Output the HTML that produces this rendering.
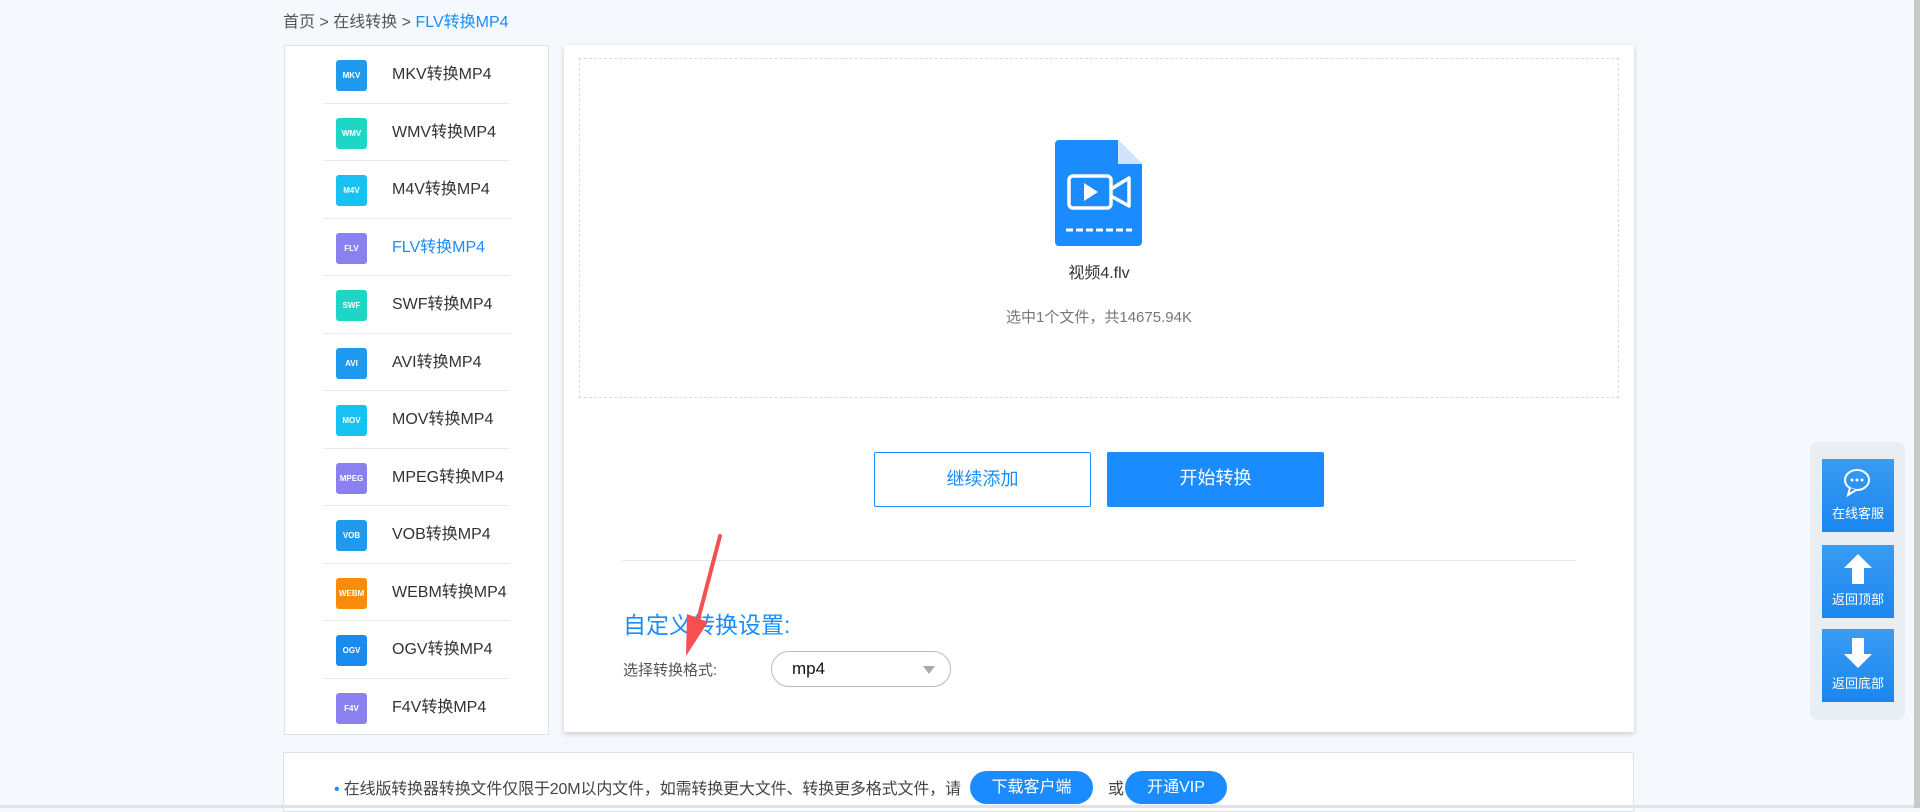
<!DOCTYPE html>
<html><head><meta charset="utf-8"><style>
*{margin:0;padding:0;box-sizing:border-box}
body{width:1920px;height:808px;overflow:hidden;background:#f5f9fd;font-family:"Liberation Sans","Noto Sans CJK SC",sans-serif;position:relative;color:#333}
.abs{position:absolute}
.bc{left:283px;top:8px;font-size:16px;color:#555}
.bc b{font-weight:normal;color:#1a8cff}
.side{left:284px;top:45px;width:265px;height:690px;background:#fff;border:1px solid #dde3ea}
.item{position:absolute;left:38px;width:187px;height:57.5px;border-bottom:1px solid #e8ecf0}
.item:last-child{border-bottom:none}
.ic{position:absolute;left:13px;top:14px;width:31px;height:31px;border-radius:3px;color:#fff;font-size:8px;font-weight:bold;text-align:center;line-height:31px}
.it{position:absolute;left:69px;top:0;line-height:57px;font-size:16px;color:#333}
.main{left:564px;top:45px;width:1070px;height:687px;background:#fff;box-shadow:0 2px 5px rgba(0,0,0,.18)}
.dash{left:15px;top:13px;width:1040px;height:340px;border:1px dashed #d5dbe2}
.btn{position:absolute;top:407px;width:217px;height:55px;font-size:18px;text-align:center;line-height:53px;border-radius:2px}
.side2{left:1810px;top:442px;width:95px;height:278px;background:#e9eef3;border-radius:8px}
.fb{position:absolute;left:12px;width:72px;height:73px;background:linear-gradient(#3a9cf2,#1a86f0);color:#fff;font-size:13px;text-align:center}
.fb span{position:absolute;left:0;right:0;bottom:10px}
.bot{left:283px;top:752px;width:1351px;height:60px;background:#fff;border:1px solid #dde3ea}
.pill{position:absolute;top:18px;height:33px;border-radius:17px;background:#1a8cff;color:#fff;font-size:16px;text-align:center;line-height:33px}
</style></head><body>
<div class="abs bc">首页 &gt; 在线转换 &gt; <b>FLV转换MP4</b></div>
<div class="abs side">
<div class="item" style="top:0"><div class="ic" style="background:#1e9bf0">MKV</div><div class="it">MKV转换MP4</div></div>
<div class="item" style="top:57.5px"><div class="ic" style="background:#1dd6c6">WMV</div><div class="it">WMV转换MP4</div></div>
<div class="item" style="top:115px"><div class="ic" style="background:#17c1f2">M4V</div><div class="it">M4V转换MP4</div></div>
<div class="item" style="top:172.5px"><div class="ic" style="background:#8a80f0">FLV</div><div class="it" style="color:#1a8cff">FLV转换MP4</div></div>
<div class="item" style="top:230px"><div class="ic" style="background:#1dd6c6">SWF</div><div class="it">SWF转换MP4</div></div>
<div class="item" style="top:287.5px"><div class="ic" style="background:#1e9bf0">AVI</div><div class="it">AVI转换MP4</div></div>
<div class="item" style="top:345px"><div class="ic" style="background:#17c1f2">MOV</div><div class="it">MOV转换MP4</div></div>
<div class="item" style="top:402.5px"><div class="ic" style="background:#8a80f0">MPEG</div><div class="it">MPEG转换MP4</div></div>
<div class="item" style="top:460px"><div class="ic" style="background:#1e9bf0">VOB</div><div class="it">VOB转换MP4</div></div>
<div class="item" style="top:517.5px"><div class="ic" style="background:#fa8c0a">WEBM</div><div class="it">WEBM转换MP4</div></div>
<div class="item" style="top:575px"><div class="ic" style="background:#1a8cf0">OGV</div><div class="it">OGV转换MP4</div></div>
<div class="item" style="top:632.5px"><div class="ic" style="background:#8a80f0">F4V</div><div class="it">F4V转换MP4</div></div>
</div>
<div class="abs main">
<div class="abs dash"></div>
<svg class="abs" style="left:491px;top:95px" width="87" height="106" viewBox="0 0 87 106">
<path d="M4 0H63L87 24V102a4 4 0 0 1-4 4H4a4 4 0 0 1-4-4V4a4 4 0 0 1 4-4z" fill="#1a8cff"/>
<path d="M63 0L87 24H63z" fill="#cfe4fb"/>
<rect x="14" y="36" width="42" height="32" rx="4" fill="none" stroke="#fff" stroke-width="3.5"/>
<path d="M29 43L43 52L29 61z" fill="#fff"/>
<path d="M56 49L74 38V66L56 56" fill="none" stroke="#fff" stroke-width="3.5" stroke-linejoin="round"/>
<path d="M11 90H77" stroke="#fff" stroke-width="3" stroke-dasharray="7 3"/>
</svg>
<div class="abs" style="left:0;width:1070px;top:214px;text-align:center;font-size:16px;color:#333">视频4.flv</div>
<div class="abs" style="left:0;width:1070px;top:261px;text-align:center;font-size:15px;color:#777">选中1个文件，共14675.94K</div>
<div class="btn" style="left:310px;border:1px solid #1a8cff;color:#1a8cff;background:#fff">继续添加</div>
<div class="btn" style="left:543px;background:#1a8cff;color:#fff">开始转换</div>
<div class="abs" style="left:58px;top:515px;width:953px;border-top:1px solid #e3e7ec"></div>
<div class="abs" style="left:59px;top:561px;font-size:23px;color:#1a8cff">自定义转换设置:</div>
<div class="abs" style="left:59px;top:614px;font-size:15px;color:#555">选择转换格式:</div>
<div class="abs" style="left:207px;top:606px;width:180px;height:36px;border:1px solid #bbb;border-radius:18px;font-size:17px;color:#111;line-height:34px;padding-left:20px">mp4<span style="position:absolute;right:15px;top:14px;border:6px solid transparent;border-top:8px solid #aaa;border-bottom:none"></span></div>
</div>
<svg class="abs" style="left:670px;top:530px" width="70" height="135"><path d="M50 6L28 90" stroke="#f54f4f" stroke-width="4" stroke-linecap="round"/><path d="M17 84L16 126L38 92z" fill="#f54f4f"/></svg>
<div class="abs bot">
<div class="abs" style="left:50px;top:22px;font-size:16px;color:#444;letter-spacing:-0.15px"><span style="color:#1a8cff">•</span> 在线版转换器转换文件仅限于20M以内文件，如需转换更大文件、转换更多格式文件，请</div>
<div class="pill" style="left:686px;width:123px">下载客户端</div>
<div class="abs" style="left:824px;top:22px;font-size:16px;color:#444">或</div>
<div class="pill" style="left:841px;width:102px">开通VIP</div>
</div>
<div class="abs side2">
<div class="fb" style="top:17px"><svg class="abs" style="left:21px;top:9px" width="32" height="30" viewBox="0 0 32 30"><ellipse cx="14" cy="12" rx="12" ry="10" fill="none" stroke="#fff" stroke-width="2"/><path d="M7 20L5 27L13 22" fill="#1a8cf0" stroke="#fff" stroke-width="2"/><circle cx="9" cy="12" r="1.5" fill="#fff"/><circle cx="14" cy="12" r="1.5" fill="#fff"/><circle cx="19" cy="12" r="1.5" fill="#fff"/></svg><span>在线客服</span></div>
<div class="fb" style="top:103px"><svg class="abs" style="left:22px;top:9px" width="28" height="30"><path d="M14 0L28 14H20V30H8V14H0z" fill="#fff"/></svg><span>返回顶部</span></div>
<div class="fb" style="top:187px"><svg class="abs" style="left:22px;top:9px" width="28" height="30"><path d="M14 30L28 16H20V0H8V16H0z" fill="#fff"/></svg><span>返回底部</span></div>
</div>
<div class="abs" style="left:1914px;top:0;width:6px;height:808px;background:#c8c8c8"></div>
<div class="abs" style="left:0;top:805px;width:1914px;height:3px;background:#dfe3e6"></div>
</body></html>
